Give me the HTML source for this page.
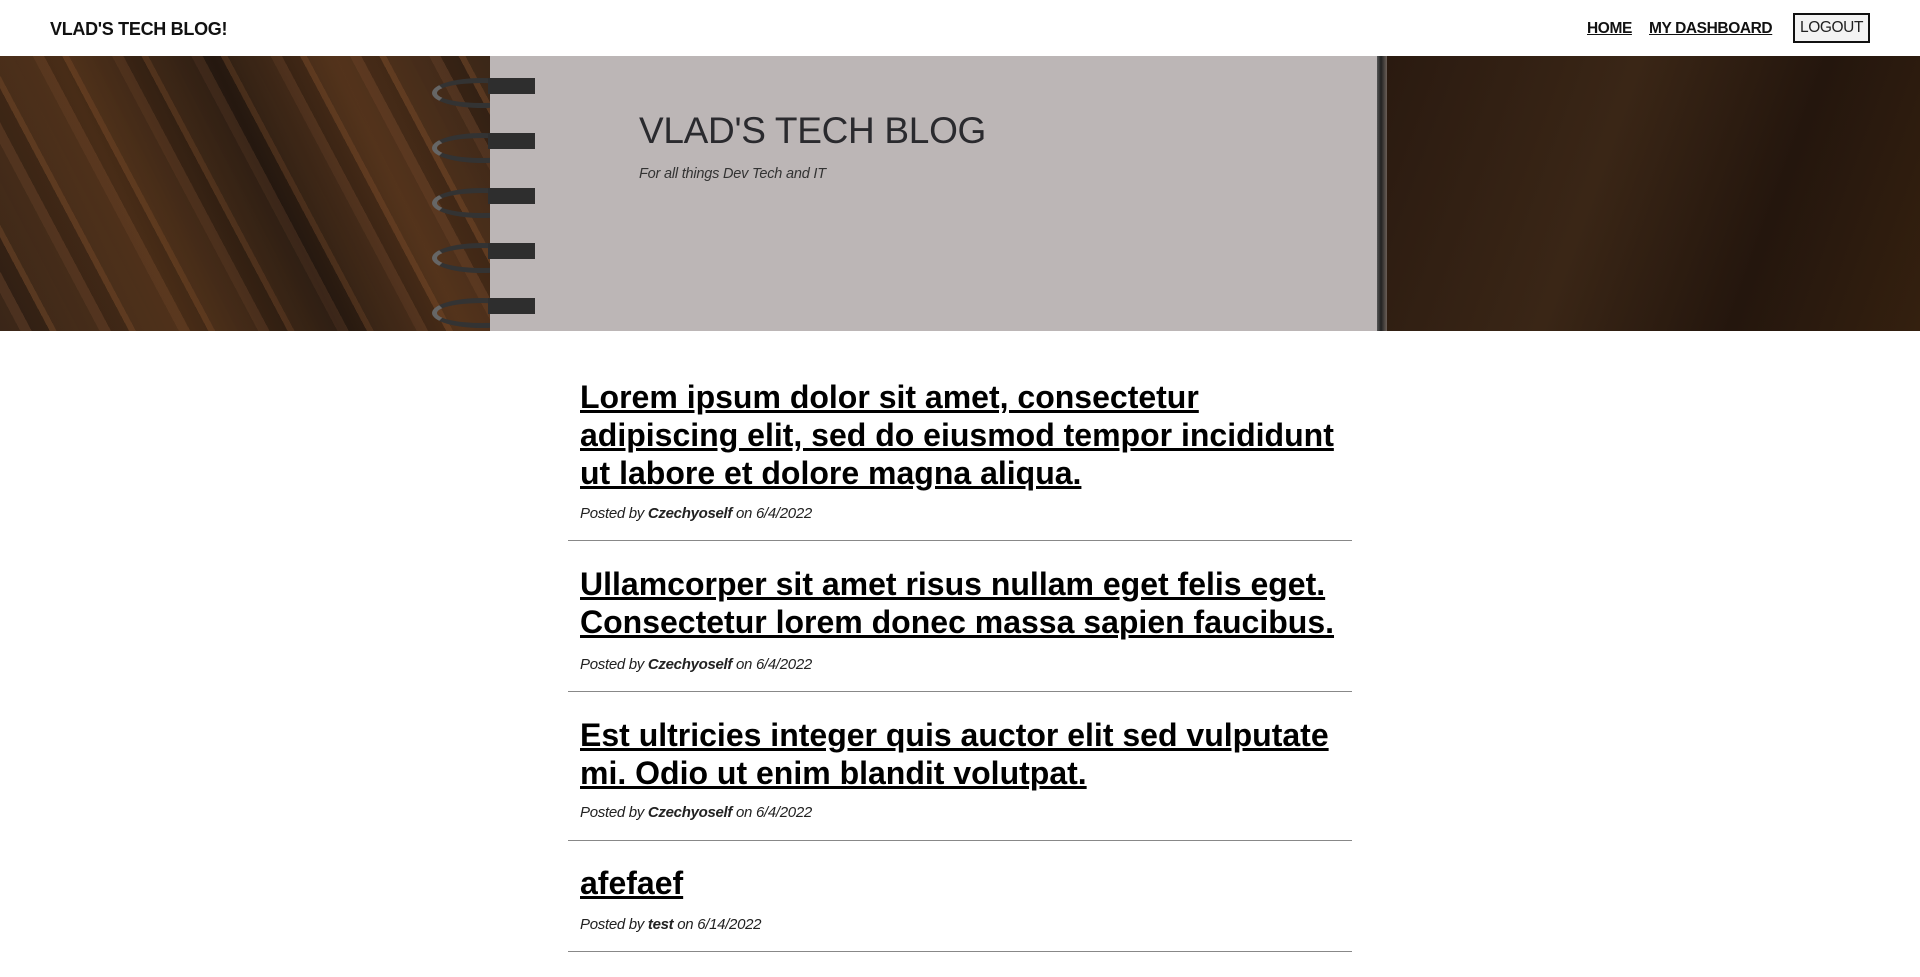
<!DOCTYPE html>
<html><head><meta charset="utf-8"><style>
*{margin:0;padding:0;box-sizing:border-box}
body{width:1920px;height:977px;background:#fff;font-family:"Liberation Sans",sans-serif;position:relative;overflow:hidden}
.a{position:absolute}
.brand{left:50px;top:19px;font-size:18px;font-weight:bold;color:#111;letter-spacing:-0.3px}
.nl{top:20px;font-size:15.5px;font-weight:bold;color:#111;text-decoration:underline;letter-spacing:-0.4px}
.lo{left:1793px;top:13px;width:77px;height:30px;border:2px solid #111;font-size:15.5px;color:#222;text-align:center;line-height:26px;background:#f3f3f3;letter-spacing:-0.4px}
.wl{left:0;top:56px;width:490px;height:275px;background:linear-gradient(65deg,rgba(0,0,0,0) 0,rgba(120,70,30,.35) 30%,rgba(0,0,0,.2) 55%,rgba(140,80,35,.3) 75%,rgba(0,0,0,0) 100%),repeating-linear-gradient(62deg,#3a2618 0 18px,#4a301f 18px 28px,#2e1e13 28px 44px,#553620 44px 50px,#3b2718 50px 70px)}
.wr{left:1387px;top:56px;width:533px;height:275px;background:linear-gradient(110deg,#2a1a10,#3a2616 40%,#24160d 70%,#34200f);}
.pp{left:490px;top:56px;width:887px;height:275px;background:#bcb6b6}
.ln{left:1377px;top:56px;width:10px;height:275px;background:linear-gradient(90deg,#555,#222 40%,#6b5f58)}
.sp{left:432px;width:100px;height:30px;border:5px solid #333;border-radius:50%;border-left-color:#666}
.h1{left:639px;top:110px;font-size:37px;color:#2a2a2e;letter-spacing:-0.3px}
.sub{left:639px;top:166px;font-size:14.5px;font-style:italic;color:#333;letter-spacing:-0.2px}
.t{left:580px;font-size:32px;font-weight:bold;color:#000;text-decoration:underline;line-height:38px;width:780px}
.m{left:580px;font-size:15px;font-style:italic;color:#222;letter-spacing:-0.3px}
.hr{left:568px;width:784px;height:1px;background:#888}
</style></head><body>
<div class="a brand">VLAD'S TECH BLOG!</div>
<div class="a nl" style="left:1587px">HOME</div>
<div class="a nl" style="left:1649px">MY DASHBOARD</div>
<div class="a lo">LOGOUT</div>
<div class="a wl"></div><div class="a pp"></div><div class="a ln"></div><div class="a wr"></div>
<div class="a sp" style="top:78px"></div>
<div class="a sp" style="top:133px"></div>
<div class="a sp" style="top:188px"></div>
<div class="a sp" style="top:243px"></div>
<div class="a sp" style="top:298px"></div>
<div class="a" style="left:490px;top:56px;width:45px;height:275px;background:#bcb6b6"></div>
<div class="a" style="left:488px;top:72px;width:47px;height:259px;background:repeating-linear-gradient(180deg,transparent 0 6px,#2e2e2e 6px 22px,transparent 22px 55px)"></div>
<div class="a h1">VLAD'S TECH BLOG</div>
<div class="a sub">For all things Dev Tech and IT</div>

<div class="a t" style="top:378px">Lorem ipsum dolor sit amet, consectetur adipiscing elit, sed do eiusmod tempor incididunt ut labore et dolore magna aliqua.</div>
<div class="a m" style="top:505px">Posted by <b>Czechyoself</b> on 6/4/2022</div>
<div class="a hr" style="top:540px"></div>
<div class="a t" style="top:565px">Ullamcorper sit amet risus nullam eget felis eget. Consectetur lorem donec massa sapien faucibus.</div>
<div class="a m" style="top:656px">Posted by <b>Czechyoself</b> on 6/4/2022</div>
<div class="a hr" style="top:691px"></div>
<div class="a t" style="top:716px">Est ultricies integer quis auctor elit sed vulputate mi. Odio ut enim blandit volutpat.</div>
<div class="a m" style="top:804px">Posted by <b>Czechyoself</b> on 6/4/2022</div>
<div class="a hr" style="top:840px"></div>
<div class="a t" style="top:864px">afefaef</div>
<div class="a m" style="top:916px">Posted by <b>test</b> on 6/14/2022</div>
<div class="a hr" style="top:951px"></div>
</body></html>
